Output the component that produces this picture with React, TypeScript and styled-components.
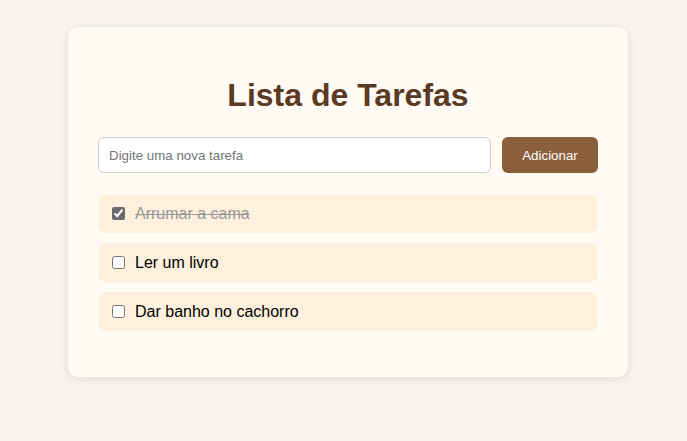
import React, { useState } from "react";
import styled, { createGlobalStyle } from "styled-components";

const Global = createGlobalStyle`
  html, body { margin: 0; padding: 0; background: #f7f3ee; }
  body { font-family: "Liberation Sans", Arial, sans-serif; }
`;

const Page = styled.div`
  padding-top: 27px;
  padding-left: 68px;
  min-height: 441px;
  box-sizing: border-box;
`;

const Card = styled.div`
  width: 560px;
  box-sizing: border-box;
  background: #fffaf3;
  border-radius: 10px;
  box-shadow: 0 2px 10px rgba(0, 0, 0, 0.1);
  padding: 50px 30px 30px;
`;

const Title = styled.h1`
  margin: 0 0 23px;
  text-align: center;
  font-size: 32px;
  font-weight: bold;
  color: #5b3a24;
`;

const Form = styled.div`
  display: flex;
  gap: 11px;
`;

const Input = styled.input`
  flex: 1;
  height: 36px;
  box-sizing: border-box;
  border: 1px solid #ccc;
  border-radius: 6px;
  padding: 0 10px;
  font-family: "Liberation Sans", Arial, sans-serif;
  font-size: 13.33px;
  background: #fff;
  &::placeholder { color: #757575; }
`;

const Button = styled.button`
  width: 96px;
  height: 36px;
  border: none;
  border-radius: 6px;
  background: #8b5e3c;
  color: #fff;
  font-family: "Liberation Sans", Arial, sans-serif;
  font-size: 13.33px;
  font-weight: normal;
`;

const List = styled.ul`
  list-style: none;
  margin: 21px 0 16px;
  padding: 0;
  display: flex;
  flex-direction: column;
  gap: 10px;
`;

const Item = styled.li`
  display: flex;
  align-items: center;
  height: 39px;
  padding: 0 11px;
  background: #fdf0dc;
  border-radius: 8px;
`;

const Check = styled.input`
  margin: 0 10px 0 3px;
  width: 13px;
  height: 13px;
  accent-color: #6b6b6b;
`;

const Label = styled.span<{ $done: boolean }>`
  font-size: 16px;
  color: ${(p) => (p.$done ? "#999" : "#000")};
  text-decoration: ${(p) => (p.$done ? "line-through" : "none")};
`;

export default function App() {
  const [tasks, setTasks] = useState([
    { text: "Arrumar a cama", done: true },
    { text: "Ler um livro", done: false },
    { text: "Dar banho no cachorro", done: false },
  ]);
  return (
    <Page>
      <Global />
      <Card>
        <Title>Lista de Tarefas</Title>
        <Form>
          <Input placeholder="Digite uma nova tarefa" />
          <Button>Adicionar</Button>
        </Form>
        <List>
          {tasks.map((t, i) => (
            <Item key={i}>
              <Check
                type="checkbox"
                checked={t.done}
                onChange={() =>
                  setTasks(tasks.map((x, j) => (j === i ? { ...x, done: !x.done } : x)))
                }
              />
              <Label $done={t.done}>{t.text}</Label>
            </Item>
          ))}
        </List>
      </Card>
    </Page>
  );
}
